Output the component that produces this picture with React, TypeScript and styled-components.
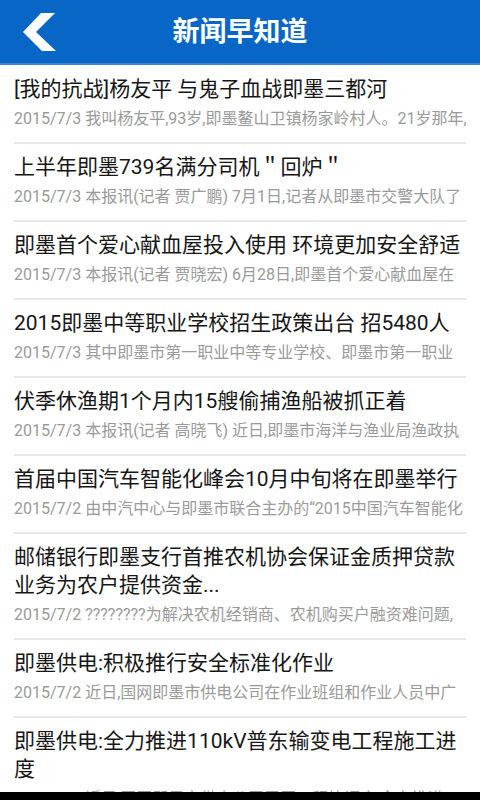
import React from 'react';
import styled, { createGlobalStyle } from 'styled-components';

const GlobalStyle = createGlobalStyle`
  html, body {
    margin: 0;
    padding: 0;
    background: #ffffff;
  }
  body {
    font-family: Roboto, "Noto Sans CJK SC", sans-serif;
  }
`;

const Screen = styled.div`
  display: flex;
  flex-direction: column;
  width: 480px;
  height: 800px;
  overflow: hidden;
  background: #ffffff;
`;

const TopBar = styled.div`
  flex: none;
  display: grid;
  grid-template-columns: 72px 1fr 72px;
  align-items: center;
  height: 63px;
  background: #0766c6;
  border-bottom: 2px solid #3b86d4;
`;

const BackButton = styled.button`
  display: flex;
  align-items: center;
  justify-content: flex-start;
  height: 63px;
  padding: 0 0 0 18px;
  border: none;
  background: transparent;
  cursor: pointer;
`;

const Title = styled.h1`
  margin: 0 0 4px;
  text-align: center;
  color: #ffffff;
  font-size: 27px;
  font-weight: bold;
  font-family: Roboto, "Noto Sans CJK SC", sans-serif;
`;

const NewsList = styled.ul`
  flex: 1;
  margin: 0;
  padding: 1px 0 0;
  list-style: none;
  overflow: hidden;
`;

const NewsItem = styled.li`
  margin: 0 14px;
  padding: 9px 0 7px;
  border-bottom: 2px solid #e8e8e8;
`;

const Headline = styled.div`
  font-size: 21px;
  line-height: 28px;
  color: #161616;
`;

const Summary = styled.div`
  font-size: 16px;
  line-height: 32px;
  color: #9a9a9a;
  white-space: nowrap;
  overflow: hidden;
`;

const NavBar = styled.div`
  flex: none;
  height: 8px;
  background: #000000;
`;

const news = [
  {
    title: '[我的抗战]杨友平 与鬼子血战即墨三都河',
    summary: '2015/7/3 我叫杨友平,93岁,即墨鳌山卫镇杨家岭村人。21岁那年,',
  },
  {
    title: '上半年即墨739名满分司机＂回炉＂',
    summary: '2015/7/3 本报讯(记者 贾广鹏) 7月1日,记者从即墨市交警大队了',
  },
  {
    title: '即墨首个爱心献血屋投入使用 环境更加安全舒适',
    summary: '2015/7/3 本报讯(记者 贾晓宏) 6月28日,即墨首个爱心献血屋在',
  },
  {
    title: '2015即墨中等职业学校招生政策出台 招5480人',
    summary: '2015/7/3 其中即墨市第一职业中等专业学校、即墨市第一职业',
  },
  {
    title: '伏季休渔期1个月内15艘偷捕渔船被抓正着',
    summary: '2015/7/3 本报讯(记者 高晓飞) 近日,即墨市海洋与渔业局渔政执',
  },
  {
    title: '首届中国汽车智能化峰会10月中旬将在即墨举行',
    summary: '2015/7/2 由中汽中心与即墨市联合主办的“2015中国汽车智能化',
  },
  {
    title: '邮储银行即墨支行首推农机协会保证金质押贷款业务为农户提供资金...',
    summary: '2015/7/2 ????????为解决农机经销商、农机购买户融资难问题,',
  },
  {
    title: '即墨供电:积极推行安全标准化作业',
    summary: '2015/7/2 近日,国网即墨市供电公司在作业班组和作业人员中广',
  },
  {
    title: '即墨供电:全力推进110kV普东输变电工程施工进度',
    summary: '2015/7/2 近日,国网即墨市供电公司召开工程协调会,全力推进工',
  },
];

const BackArrow = () => (
  <svg width="44" height="44" viewBox="18 10 44 44">
    <polygon points="23,32 41,13 55,13 36,32 56,51 42,51" fill="#ffffff" />
  </svg>
);

const App = () => {
  return (
    <Screen>
      <GlobalStyle />
      <TopBar>
        <BackButton aria-label="返回">
          <BackArrow />
        </BackButton>
        <Title>新闻早知道</Title>
        <div />
      </TopBar>
      <NewsList>
        {news.map((item, index) => (
          <NewsItem key={index}>
            <Headline>{item.title}</Headline>
            <Summary>{item.summary}</Summary>
          </NewsItem>
        ))}
      </NewsList>
      <NavBar />
    </Screen>
  );
};

export default App;
